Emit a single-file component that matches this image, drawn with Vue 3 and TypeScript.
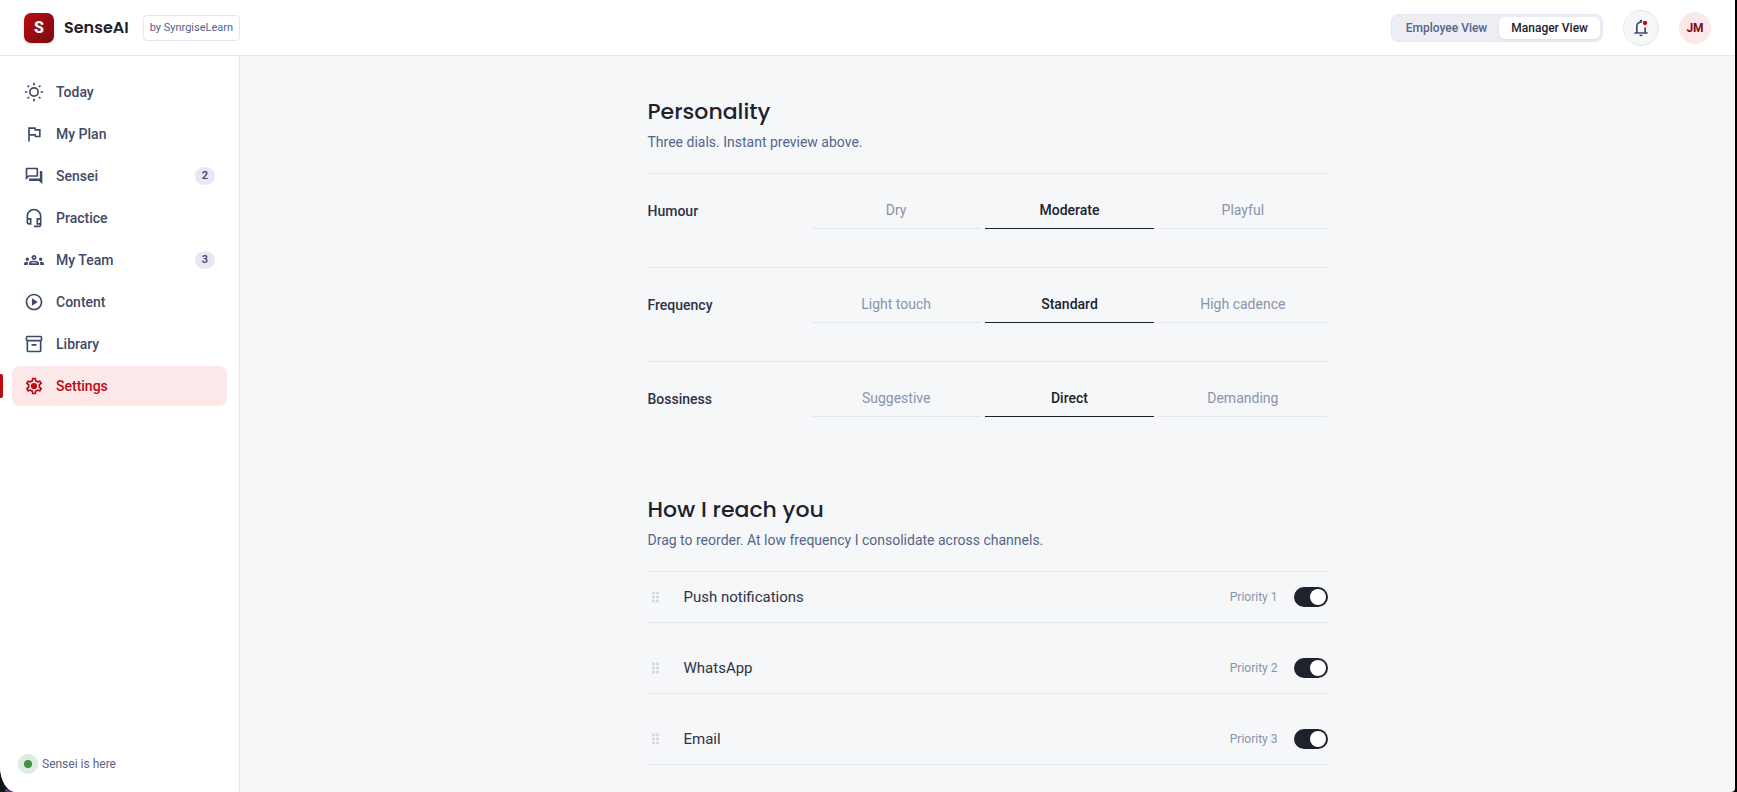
<script setup lang="ts">
import { reactive, ref } from 'vue'

interface NavItem {
  label: string
  icon: string
  badge?: number
}

interface Dial {
  name: string
  options: string[]
  value: string
}

interface Channel {
  name: string
  enabled: boolean
}

const icons: Record<string, string> = {
  flag: 'M12.36 6l.4 2H18v6h-3.36l-.4-2H7V6h5.36M14 4H5v17h2v-7h5.6l.4 2h7V6h-5.6L14 4z',
  forum:
    'M15 4v7H5.17L4 12.17V4h11m1-2H3c-.55 0-1 .45-1 1v14l4-4h10c.55 0 1-.45 1-1V3c0-.55-.45-1-1-1zm5 4h-2v9H6v2c0 .55.45 1 1 1h11l4 4V7c0-.55-.45-1-1-1z',
  headset:
    'M19 14v4h-2v-4h2M7 14v4H6c-.55 0-1-.45-1-1v-3h2m5-13c-4.97 0-9 4.03-9 9v7c0 1.66 1.34 3 3 3h3v-8H5v-2c0-3.87 3.13-7 7-7s7 3.13 7 7v2h-4v8h4v1h-7v2h6c1.66 0 3-1.34 3-3V10c0-4.97-4.03-9-9-9z',
  groups:
    'M4 13c1.1 0 2-.9 2-2s-.9-2-2-2-2 .9-2 2 .9 2 2 2zm1.13 1.1C4.76 14.04 4.39 14 4 14c-.99 0-1.93.21-2.78.58C.48 14.9 0 15.62 0 16.43V18h4.5v-1.61c0-.83.23-1.61.63-2.29zM20 13c1.1 0 2-.9 2-2s-.9-2-2-2-2 .9-2 2 .9 2 2 2zm4 3.43c0-.81-.48-1.53-1.22-1.85C21.93 14.21 20.99 14 20 14c-.39 0-.76.04-1.13.1.4.68.63 1.46.63 2.29V18H24v-1.57zM16.24 13.65C15.07 13.13 13.63 12.75 12 12.75s-3.07.39-4.24.9C6.68 14.13 6 15.21 6 16.39V18h12v-1.61c0-1.18-.68-2.26-1.76-2.74zM8.07 16c.09-.23.13-.39.91-.69.97-.38 1.99-.56 3.02-.56s2.05.18 3.02.56c.77.3.81.46.91.69H8.07zM12 8c.55 0 1 .45 1 1s-.45 1-1 1-1-.45-1-1 .45-1 1-1m0-2c-1.66 0-3 1.34-3 3s1.34 3 3 3 3-1.34 3-3-1.34-3-3-3z',
  play: 'M12 2C6.48 2 2 6.48 2 12s4.48 10 10 10 10-4.48 10-10S17.52 2 12 2zm0 18c-4.41 0-8-3.59-8-8s3.59-8 8-8 8 3.59 8 8-3.59 8-8 8zm-2.5-3.5l7-4.5-7-4.5z',
  archive:
    'M20 2H4c-1 0-2 .9-2 2v3.01c0 .72.43 1.34 1 1.69V20c0 1.1 1.1 2 2 2h14c.9 0 2-.9 2-2V8.7c.57-.35 1-.97 1-1.69V4c0-1.1-1-2-2-2zm-1 18H5V9h14v11zm1-13H4V4h16v3zM9 12h6v2H9z',
  settings:
    'M19.43 12.98c.04-.32.07-.64.07-.98s-.03-.66-.07-.98l2.11-1.65c.19-.15.24-.42.12-.64l-2-3.46c-.09-.16-.26-.25-.44-.25-.06 0-.12.01-.17.03l-2.49 1c-.52-.4-1.08-.73-1.69-.98l-.38-2.65C14.46 2.18 14.25 2 14 2h-4c-.25 0-.46.18-.49.42l-.38 2.65c-.61.25-1.17.59-1.69.98l-2.49-1c-.06-.02-.12-.03-.18-.03-.17 0-.34.09-.43.25l-2 3.46c-.13.22-.07.49.12.64l2.11 1.65c-.04.32-.07.65-.07.98s.03.66.07.98l-2.11 1.65c-.19.15-.24.42-.12.64l2 3.46c.09.16.26.25.44.25.06 0 .12-.01.17-.03l2.49-1c.52.4 1.08.73 1.69.98l.38 2.65c.03.24.24.42.49.42h4c.25 0 .46-.18.49-.42l.38-2.65c.61-.25 1.17-.59 1.69-.98l2.49 1c.06.02.12.03.18.03.17 0 .34-.09.43-.25l2-3.46c.12-.22.07-.49-.12-.64l-2.11-1.65zm-1.98-1.71c.04.31.05.52.05.73 0 .21-.02.43-.05.73l-.14 1.13.89.7 1.08.84-.7 1.21-1.27-.51-1.04-.42-.9.68c-.43.32-.84.56-1.25.73l-1.06.43-.16 1.13-.2 1.35h-1.4l-.19-1.35-.16-1.13-1.06-.43c-.43-.18-.83-.41-1.23-.71l-.91-.7-1.06.43-1.27.51-.7-1.21 1.08-.84.89-.7-.14-1.13c-.03-.31-.05-.54-.05-.74s.02-.43.05-.73l.14-1.13-.89-.7-1.08-.84.7-1.21 1.27.51 1.04.42.9-.68c.43-.32.84-.56 1.25-.73l1.06-.43.16-1.13.2-1.35h1.39l.19 1.35.16 1.13 1.06.43c.43.18.83.41 1.23.71l.91.7 1.06-.43 1.27-.51.7 1.21-1.07.85-.89.7.14 1.13z',
}

const navItems: NavItem[] = [
  { label: 'Today', icon: 'sun' },
  { label: 'My Plan', icon: 'flag' },
  { label: 'Sensei', icon: 'forum', badge: 2 },
  { label: 'Practice', icon: 'headset' },
  { label: 'My Team', icon: 'groups', badge: 3 },
  { label: 'Content', icon: 'play' },
  { label: 'Library', icon: 'archive' },
  { label: 'Settings', icon: 'settings' },
]

const views = ['Employee View', 'Manager View']
const activeView = ref('Manager View')
const activeNav = ref('Settings')

const dials = reactive<Dial[]>([
  { name: 'Humour', options: ['Dry', 'Moderate', 'Playful'], value: 'Moderate' },
  { name: 'Frequency', options: ['Light touch', 'Standard', 'High cadence'], value: 'Standard' },
  { name: 'Bossiness', options: ['Suggestive', 'Direct', 'Demanding'], value: 'Direct' },
])

const channels = reactive<Channel[]>([
  { name: 'Push notifications', enabled: true },
  { name: 'WhatsApp', enabled: true },
  { name: 'Email', enabled: true },
])
</script>

<template>
  <div class="desktop">
    <div class="window">
      <header class="topbar">
        <div class="brand">
          <span class="logo">S</span>
          <span class="brand-name">SenseAI</span>
          <span class="brand-by">by SynrgiseLearn</span>
        </div>
        <div class="top-actions">
          <div class="view-switch" role="group" aria-label="View">
            <button
              v-for="view in views"
              :key="view"
              type="button"
              class="view-btn"
              :class="{ active: view === activeView }"
              :aria-pressed="view === activeView"
              @click="activeView = view"
            >
              {{ view }}
            </button>
          </div>
          <button type="button" class="bell" aria-label="Notifications">
            <svg viewBox="0 0 24 24" width="20" height="20" fill="none" stroke="currentColor" stroke-width="2" aria-hidden="true">
              <path d="M4 18h16M7 18v-8c0-2.5 1.6-4.4 4-4.9l1.6-.1M17 11.5V18" />
              <path d="M10.5 5V3.5a1.5 1.5 0 0 1 3 0V4l-1 1.5z" fill="currentColor" stroke="none" />
              <path d="M10 20h4a2 2 0 0 1-4 0z" fill="currentColor" stroke="none" />
              <circle cx="16.8" cy="6" r="2.6" fill="#c4060f" stroke="none" />
            </svg>
          </button>
          <button type="button" class="avatar" aria-label="Account: JM">JM</button>
        </div>
      </header>

      <div class="body">
        <aside class="sidebar">
          <nav class="nav" aria-label="Main">
            <a
              v-for="item in navItems"
              :key="item.label"
              href="#"
              class="nav-link"
              :class="{ active: item.label === activeNav }"
              :aria-current="item.label === activeNav ? 'page' : undefined"
              @click.prevent="activeNav = item.label"
            >
              <svg class="nav-icon" viewBox="0 0 24 24" aria-hidden="true">
                <g v-if="item.icon === 'sun'">
                  <circle cx="12" cy="12" r="5" fill="none" stroke="currentColor" stroke-width="2" />
                  <path d="M12 1v3M12 20v3M1 12h3M20 12h3" stroke="currentColor" stroke-width="2" />
                  <path d="M4.3 4.3L6 6M18 18l1.7 1.7M4.3 19.7L6 18M18 6l1.7-1.7" stroke="currentColor" stroke-width="2" />
                </g>
                <path v-else :d="icons[item.icon]" fill="currentColor" />
                <circle v-if="item.icon === 'settings'" cx="12" cy="12" r="3.7" fill="currentColor" />
              </svg>
              <span class="nav-label">{{ item.label }}</span>
              <span v-if="item.badge" class="badge">{{ item.badge }}</span>
            </a>
          </nav>
          <div class="status"><span class="status-dot"></span>Sensei is here</div>
        </aside>

        <main class="main">
          <div class="content">
            <section>
              <h2>Personality</h2>
              <p class="sub">Three dials. Instant preview above.</p>
              <div
                v-for="dial in dials"
                :key="dial.name"
                class="dial"
                role="radiogroup"
                :aria-label="dial.name"
              >
                <span class="dial-name">{{ dial.name }}</span>
                <div class="options">
                  <label
                    v-for="option in dial.options"
                    :key="option"
                    class="option"
                    :class="{ active: option === dial.value }"
                  >
                    <input v-model="dial.value" type="radio" :name="dial.name" :value="option" />
                    {{ option }}
                  </label>
                </div>
              </div>
            </section>

            <section>
              <h2>How I reach you</h2>
              <p class="sub">Drag to reorder. At low frequency I consolidate across channels.</p>
              <ul class="channels">
                <li v-for="(channel, index) in channels" :key="channel.name" class="channel">
                  <button type="button" class="grip" :aria-label="`Reorder ${channel.name}`">
                    <svg viewBox="0 0 16 16" width="16" height="16" fill="currentColor" aria-hidden="true">
                      <template v-for="y in [4, 8, 12]" :key="y">
                        <circle cx="5.5" :cy="y" r="1.4" />
                        <circle cx="9.5" :cy="y" r="1.4" />
                      </template>
                    </svg>
                  </button>
                  <label :for="`channel-${index}`" class="channel-name">{{ channel.name }}</label>
                  <span class="priority">Priority {{ index + 1 }}</span>
                  <input :id="`channel-${index}`" v-model="channel.enabled" type="checkbox" role="switch" class="toggle" />
                </li>
              </ul>
            </section>
          </div>
        </main>
      </div>
    </div>
  </div>
</template>

<style>
body {
  margin: 0;
}
</style>

<style scoped>
* {
  box-sizing: border-box;
}

.desktop {
  min-height: 100vh;
  display: flex;
  padding-right: 2px;
  background:
    linear-gradient(#5b3478, #5b3478) 5px 100% / 12px 3px no-repeat,
    linear-gradient(90deg, #11151a 20px, #000 20px);
  font-family: Roboto, "Liberation Sans", sans-serif;
  font-size: 14px;
  color: #1e222d;
}

.window {
  flex: 1;
  display: flex;
  flex-direction: column;
  background: #f5f7f9;
  border-radius: 0 0 4px 16px / 0 0 4px 26px;
  overflow: hidden;
}

button {
  font: inherit;
  color: inherit;
  padding: 0;
  border: 0;
  background: none;
  cursor: pointer;
}

.topbar {
  height: 56px;
  display: flex;
  align-items: center;
  justify-content: space-between;
  padding: 0 24px;
  background: #fff;
  border-bottom: 1px solid #e4e6f3;
}

.brand,
.top-actions {
  display: flex;
  align-items: center;
}

.top-actions {
  gap: 20px;
}

.logo {
  width: 30px;
  height: 30px;
  display: grid;
  place-items: center;
  border-radius: 7px;
  background: linear-gradient(135deg, #bd0c12, #740b10);
  box-shadow: 0 1px 3px rgba(30, 34, 48, 0.2);
  color: #fff;
  font-size: 16px;
  font-weight: 800;
}

.brand-name {
  margin: 0 14px 0 10px;
  font-family: Poppins, Inter, sans-serif;
  font-size: 16px;
  font-weight: 600;
}

.brand-by {
  padding: 0 6px;
  border: 1px solid #e4e6f3;
  border-radius: 4px;
  font-size: 11px;
  line-height: 24px;
  color: #56658a;
}

.view-switch {
  display: flex;
  padding: 2px;
  border: 1px solid #e4e6f3;
  border-radius: 8px;
  background: #edeef3;
}

.view-btn {
  padding: 0 12px;
  border-radius: 6px;
  font-size: 12px;
  line-height: 22px;
  font-weight: 500;
  color: #56658a;
}

.view-btn.active {
  background: #fff;
  color: #1e222d;
  box-shadow: 0 1px 2px rgba(30, 34, 48, 0.08);
}

.bell {
  width: 36px;
  height: 36px;
  display: grid;
  place-items: center;
  border: 1px solid #e4e6f3;
  border-radius: 50%;
  background: #f5f7f9;
  color: #3f4b66;
}

.avatar {
  width: 32px;
  height: 32px;
  border-radius: 50%;
  background: #fce8e8;
  color: #7d0c12;
  font-size: 12px;
  font-weight: 700;
}

.body {
  flex: 1;
  display: flex;
}

.sidebar {
  width: 240px;
  flex: none;
  display: flex;
  flex-direction: column;
  justify-content: space-between;
  background: #fff;
  border-right: 1px solid #e4e6f3;
}

.nav {
  display: flex;
  flex-direction: column;
  gap: 2px;
  padding: 16px 12px;
}

.nav-link {
  position: relative;
  height: 40px;
  display: flex;
  align-items: center;
  gap: 12px;
  padding: 0 12px;
  border-radius: 8px;
  color: #3f4b66;
  font-weight: 500;
  text-decoration: none;
}

.nav-link.active {
  background: #fce8e8;
  color: #bb0a12;
}

.nav-link.active::before {
  content: "";
  position: absolute;
  left: -12px;
  top: 8px;
  width: 3px;
  height: 24px;
  border-radius: 0 2px 2px 0;
  background: #bb0a12;
}

.nav-icon {
  width: 20px;
  height: 20px;
}

.nav-label {
  flex: 1;
}

.badge {
  min-width: 20px;
  border-radius: 9px;
  background: #e6e8f5;
  font-size: 11px;
  line-height: 18px;
  font-weight: 600;
  text-align: center;
}

.status {
  display: flex;
  align-items: center;
  gap: 10px;
  padding: 20px 24px;
  font-size: 12px;
  line-height: 16px;
  color: #56658a;
}

.status-dot {
  width: 8px;
  height: 8px;
  border-radius: 50%;
  background: #439340;
  box-shadow: 0 0 0 6px #deebdf;
}

.main {
  flex: 1;
  display: flex;
  justify-content: center;
  padding: 40px 32px 24px;
}

.content {
  width: 100%;
  max-width: 680px;
  display: flex;
  flex-direction: column;
  gap: 39px;
}

h2 {
  margin: 0;
  font-family: Poppins, Inter, sans-serif;
  font-size: 22px;
  line-height: 32px;
  font-weight: 500;
}

.sub {
  margin: 4px 0 20px;
  line-height: 21px;
  color: #56658a;
}

.dial {
  display: grid;
  grid-template-columns: 140px 1fr;
  align-items: start;
  gap: 24px;
  padding: 20px 0 38px;
  border-top: 1px solid #e4e6f3;
}

.dial-name {
  line-height: 34px;
  font-weight: 500;
  color: #2d3346;
}

.options {
  display: grid;
  grid-template-columns: repeat(3, 1fr);
  gap: 4px;
}

.option {
  position: relative;
  padding: 7px 0 9px;
  border-bottom: 1px solid #e4e6f3;
  line-height: 18px;
  text-align: center;
  color: #8a94a8;
  cursor: pointer;
}

.option.active {
  border-color: #1e222d;
  color: #1e222d;
  font-weight: 500;
}

.option input {
  position: absolute;
  inset: 0;
  margin: 0;
  appearance: none;
  cursor: pointer;
}

.channels {
  display: flex;
  flex-direction: column;
  gap: 20px;
  margin: 0;
  padding: 0;
  border-top: 1px solid #e4e6f3;
  list-style: none;
}

.channel {
  display: flex;
  align-items: center;
  padding: 15px 0;
  border-bottom: 1px solid #e4e6f3;
}

.grip {
  display: flex;
  margin-right: 20px;
  color: #cfd3e0;
  cursor: grab;
}

.channel-name {
  flex: 1;
  font-size: 15px;
  line-height: 20px;
  color: #2d3346;
}

.priority {
  margin-right: 16px;
  font-size: 12px;
  color: #8a94a8;
}

.toggle {
  width: 34px;
  height: 20px;
  display: flex;
  margin: 0;
  padding: 2px;
  appearance: none;
  border-radius: 10px;
  background: #c5cad8;
  cursor: pointer;
}

.toggle::before {
  content: "";
  width: 16px;
  height: 16px;
  border-radius: 50%;
  background: #fff;
}

.toggle:checked {
  justify-content: flex-end;
  background: #1e222d;
}
</style>
